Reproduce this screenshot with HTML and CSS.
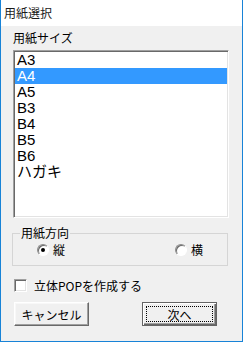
FILE: index.html
```html
<!DOCTYPE html>
<html lang="ja">
<head>
  <meta charset="UTF-8">
  <title>用紙選択</title>
  <link rel="stylesheet" href="styles.css">
</head>
<body>
  <div class="window">
    <div class="titlebar">用紙選択</div>
    <div class="content">
      <div class="label">用紙サイズ</div>
      <div class="listbox">
        <div class="item">A3</div>
        <div class="item selected">A4</div>
        <div class="item">A5</div>
        <div class="item">B3</div>
        <div class="item">B4</div>
        <div class="item">B5</div>
        <div class="item">B6</div>
        <div class="item">ハガキ</div>
      </div>
      <fieldset class="group">
        <legend>用紙方向</legend>
        <div class="radios">
          <label class="radio"><span class="circle checked"></span>縦</label>
          <label class="radio"><span class="circle"></span>横</label>
        </div>
      </fieldset>
      <label class="check"><span class="box"></span>立体POPを作成する</label>
      <div class="buttons">
        <button class="btn">キャンセル</button>
        <button class="btn default"><span class="focus">次へ</span></button>
      </div>
    </div>
  </div>
</body>
</html>
```

FILE: styles.css
```css
body {
  margin: 0;
  font-family: "Noto Sans CJK JP", sans-serif;
  font-size: 12px;
  color: #000;
  background-color: #f0f0f0;
}

.window {
  width: 243px;
  height: 342px;
  box-sizing: border-box;
  border: 1px solid #1883d7;
  border-top: none;
  background-color: #f0f0f0;
}

.titlebar {
  height: 26px;
  line-height: 26px;
  padding-left: 3px;
  background-color: white;
  color: #1a1a1a;
}

.content {
  padding: 4px 13px 0 12px;
}

.label {
  line-height: 16px;
  height: 16px;
}

.listbox {
  margin-top: 4px;
  height: 168px;
  box-sizing: border-box;
  padding: 1px;
  background-color: white;
  border: 1px solid;
  border-color: #a0a0a0 white white #a0a0a0;
  box-shadow: inset 1px 1px #696969, inset -1px -1px #e3e3e3;
}

.item {
  height: 16px;
  line-height: 16px;
  padding-left: 2px;
  font-family: "Liberation Sans", "Noto Sans CJK JP", sans-serif;
  font-size: 15px;
}

.item.selected {
  background-color: #3399ff;
  color: white;
}

.group {
  margin: 7px 1px 0 -1px;
  padding: 0;
  height: 41px;
  box-sizing: border-box;
  border: 1px solid #d5d5d5;
}

.group legend {
  margin-left: 7px;
  padding: 0 1px;
  line-height: 16px;
}

.radios {
  display: flex;
  justify-content: space-between;
  padding: 0 24px;
  margin-top: 2px;
}

.radio {
  display: flex;
  align-items: center;
  gap: 4px;
  line-height: 13px;
}

.circle {
  width: 12px;
  height: 12px;
  box-sizing: border-box;
  border-radius: 50%;
  border: 1px solid;
  border-color: #8a8a8a #fff #fff #8a8a8a;
  background-color: white;
  box-shadow: inset 1px 1px #696969;
  display: flex;
  align-items: center;
  justify-content: center;
}

.circle.checked::after {
  content: "";
  width: 4px;
  height: 4px;
  border-radius: 50%;
  background-color: black;
}

.check {
  display: flex;
  align-items: center;
  margin: 13px 0 0 1px;
  height: 13px;
}

.box {
  width: 13px;
  height: 13px;
  box-sizing: border-box;
  margin-right: 7px;
  background-color: white;
  border: 1px solid;
  border-color: #a0a0a0 #fff #fff #a0a0a0;
  box-shadow: inset 1px 1px #696969, inset -1px -1px #e3e3e3;
}

.buttons {
  display: flex;
  gap: 53px;
  margin: 10px 0 0 1px;
}

.btn {
  width: 75px;
  height: 24px;
  box-sizing: border-box;
  padding: 0;
  font-family: "Noto Sans CJK JP", sans-serif;
  font-size: 12px;
  color: black;
  background-color: #f0f0f0;
  border: 1px solid;
  border-color: white #696969 #696969 white;
  box-shadow: inset -1px -1px #a0a0a0, inset 1px 1px #f8f8f8;
}

.btn.default {
  display: flex;
  padding: 3px;
  border: 1px solid #646464;
  box-shadow: inset 1px 1px white, inset -1px -1px #696969, inset -2px -2px #a0a0a0;
}

.focus {
  flex: 1;
  display: flex;
  align-items: center;
  justify-content: center;
  border: 1px dotted black;
}
```
